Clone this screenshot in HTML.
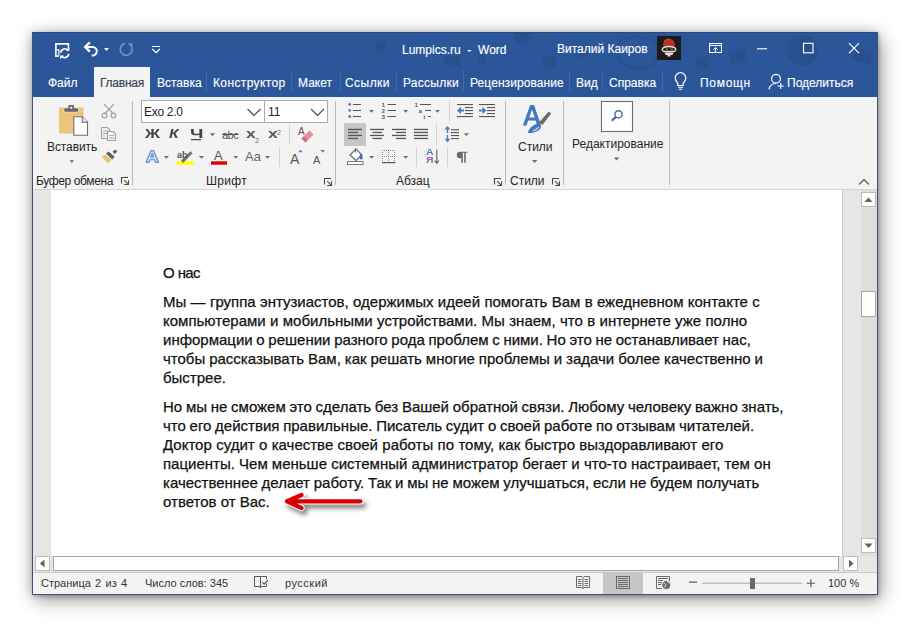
<!DOCTYPE html>
<html><head><meta charset="utf-8">
<style>
*{margin:0;padding:0;box-sizing:border-box}
html,body{width:910px;height:627px;overflow:hidden;background:#fff;font-family:"Liberation Sans",sans-serif}
.a{position:absolute}
#win{position:absolute;left:32px;top:32px;width:846px;height:563px;background:#2b579a;border:1px solid #3d5374;border-top-color:#27497f;box-shadow:1px 2px 4px rgba(0,0,0,.2),3px 5px 18px rgba(0,0,0,.4),-2px -1px 10px rgba(0,0,0,.1)}
.t{position:absolute;white-space:pre;line-height:1}
.tab{position:absolute;z-index:2;top:75.5px;-webkit-text-stroke:.12px #fff;font-size:12px;color:#fff;white-space:pre;line-height:14px}
.sep{position:absolute;width:1px;background:#5d7fb5}
.rl{position:absolute;z-index:2;font-size:12px;color:#262626;white-space:pre;line-height:14px}
.vs{position:absolute;width:1px;background:#d2d2d2}
.doc{position:absolute;z-index:2;left:163px;font-size:15px;color:#111;white-space:pre;line-height:19px;-webkit-text-stroke:.25px #111}
</style></head><body>
<div id="win"></div>

<!-- ribbon bg -->
<div class="a" style="left:33px;top:97px;width:844px;height:92px;background:#f3f3f3"></div>
<div class="a" style="left:33px;top:189px;width:844px;height:1px;background:#d5d5d5"></div>
<!-- active tab -->
<div class="a" style="left:94px;top:67px;width:56px;height:30px;background:#f3f3f3"></div>

<!-- doc area -->
<div class="a" style="left:33px;top:190px;width:844px;height:366px;background:#e6e6e6"></div>
<div class="a" style="left:51px;top:190px;width:791px;height:366px;background:#fff"></div>
<div class="a" style="left:842px;top:190px;width:1px;height:366px;background:#c8c8c8"></div>

<!-- status bar -->
<div class="a" style="left:33px;top:572px;width:844px;height:22px;background:#f3f3f3"></div>


<!-- ribbon labels -->
<div class="rl" style="left:47px;top:140px;letter-spacing:-.1px">Вставить</div>
<div class="rl" style="left:36px;top:174px;letter-spacing:-.38px">Буфер обмена</div>
<div class="rl" style="left:206px;top:174px;letter-spacing:.3px">Шрифт</div>
<div class="rl" style="left:396px;top:174px">Абзац</div>
<div class="rl" style="left:510px;top:174px">Стили</div>
<div class="rl" style="left:518px;top:140px">Стили</div>
<div class="rl" style="left:572px;top:137px">Редактирование</div>
<div class="rl" style="left:144px;top:105px;font-size:12px;letter-spacing:-.3px">Exo 2.0</div>
<div class="rl" style="left:268px;top:105px;font-size:12px">11</div>
<div class="rl" style="left:145px;top:127px;font-size:12px;font-weight:bold;color:#444;transform:scaleX(1.38);transform-origin:0 0">Ж</div>
<div class="rl" style="left:169px;top:127px;font-size:12px;font-weight:bold;font-style:italic;color:#444;transform:scaleX(1.3);transform-origin:0 0">К</div>
<div class="rl" style="left:190px;top:127px;font-size:12px;font-weight:bold;color:#444;transform:scaleX(1.6);transform-origin:0 0">Ч</div>
<div class="rl" style="left:222px;top:128px;font-size:11px;color:#555;letter-spacing:-0.5px">abc</div>
<div class="rl" style="left:246px;top:127px;font-size:13px;font-weight:bold;color:#555;transform:scaleX(1.35);transform-origin:0 0">x</div>
<div class="rl" style="left:255px;top:134px;font-size:7px;color:#4a70b0">2</div>
<div class="rl" style="left:268px;top:127px;font-size:13px;font-weight:bold;color:#555;transform:scaleX(1.35);transform-origin:0 0">x</div>
<div class="rl" style="left:277px;top:125.5px;font-size:7px;color:#4a70b0">2</div>
<div class="rl" style="left:298px;top:125px;font-size:10px;color:#555">A</div>
<div class="rl" style="left:177px;top:148px;font-size:9px;font-weight:bold;color:#555">ab</div>
<div class="rl" style="left:214px;top:149px;font-size:13px;color:#555">A</div>
<div class="rl" style="left:245px;top:150px;font-size:13px;color:#666">Aa</div>
<div class="rl" style="left:290px;top:152px;font-size:14px;color:#555">A</div>
<div class="rl" style="left:313px;top:152.5px;font-size:11px;color:#555">A</div>


<div class="rl" style="left:425.5px;top:147.5px;font-size:9.5px;font-weight:bold;color:#4a7dc0;line-height:8.5px;transform:scaleX(1.1);transform-origin:0 0">А<br><span style="color:#9b5cb8">Я</span></div>


<!-- tabs text -->
<div class="tab" style="left:48px">Файл</div>
<div class="tab" style="left:100px;color:#3c4658;-webkit-text-stroke:.2px #3c4658;letter-spacing:-.25px">Главная</div>
<div class="tab" style="left:157px">Вставка</div>
<div class="tab" style="left:213px;letter-spacing:.38px">Конструктор</div>
<div class="tab" style="left:298px">Макет</div>
<div class="tab" style="left:345px;letter-spacing:.45px">Ссылки</div>
<div class="tab" style="left:403px;letter-spacing:.25px">Рассылки</div>
<div class="tab" style="left:470px;letter-spacing:.08px">Рецензирование</div>
<div class="tab" style="left:576px">Вид</div>
<div class="tab" style="left:609px">Справка</div>
<div class="tab" style="left:700px;letter-spacing:.7px">Помощн</div>
<div class="tab" style="left:787px">Поделиться</div>



<!-- doodles -->
<svg class="a" style="left:0;top:0" width="910" height="627" viewBox="0 0 910 627">
 <g fill="#000" opacity="0.075">
  <circle cx="380.5" cy="46" r="5.5"/>
  <path d="M445 56h14l2 9h-18z"/>
  <circle cx="482" cy="59" r="4.5"/>
  <path d="M514 33h18l-2 10h-14z"/>
  <rect x="543" y="56" width="13" height="12" rx="3"/>
  <circle cx="802.6" cy="50.6" r="15.5"/>
  <path d="M728 52l16-4 4 13-16 4z"/>
  <rect x="696" y="57" width="13" height="11" rx="3"/>
  <path d="M855 47l18 5-3 13-18-5z"/>
  <circle cx="583" cy="52" r="6"/>
 </g>
 <path d="M620 40c10-5 30-5 36 5 4 8 0 20-10 23-12 3-26-2-28-12z" fill="none" stroke="#000" stroke-opacity="0.075" stroke-width="2.5"/>
</svg>

<!-- title bar icons -->
<svg class="a" style="left:0;top:0" width="910" height="627" viewBox="0 0 910 627">
 <g fill="none" stroke="#fff" stroke-width="1.6">
  <!-- save/autosave -->
  <path d="M55.9 57V43.9H68.4V48.6"/>
  <path d="M55.9 56.1H59"/>
 </g>
 <path d="M56.5 49.9H58.9V55.5" fill="none" stroke="#fff" stroke-width="1.2"/>
 <path d="M60.9 52.6a4 4 0 0 1 7.2-2.2M68.7 53.8a4 4 0 0 1-7.2 2.2" fill="none" stroke="#fff" stroke-width="1.7"/>
 <path d="M65.8 50.8h3.6v-3.6z M63.8 55.6h-3.6v3.6z" fill="#fff"/>
 <!-- undo -->
 <path d="M85.5 46.9h7a4.3 4.3 0 0 1 0 8.6h-.8" fill="none" stroke="#fff" stroke-width="2"/>
 <path d="M89 43.2l-3.8 3.7 3.8 3.8" fill="none" stroke="#fff" stroke-width="2.4" stroke-linecap="square"/>
 <path d="M104 48h5l-2.5 3z" fill="#fff"/>
 <!-- redo disabled -->
 <path d="M131.6 47.2a5.9 5.9 0 1 1-6.6-3.6" fill="none" stroke="#6f93cc" stroke-width="1.7"/>
 <path d="M127.6 43.3h4.8v4.8z" fill="#6f93cc"/>
 <!-- customize qat -->
 <path d="M152 46.5h8M152.3 49l3.8 3.6 3.8-3.6" fill="none" stroke="#fff" stroke-width="1.2"/>
 <!-- avatar -->
 <rect x="657" y="36" width="24" height="24" fill="#1e1a1b"/>
 <path d="M663 46c0-4.5 2.6-7.5 6-7.5s6 3 6 7.5z" fill="#b3302d"/>
 <path d="M664 41.5c1.5-1.5 3-2.2 5-2.2" fill="none" stroke="#d4574f" stroke-width="1"/>
 <path d="M662.5 48.5c1.5-1.8 3.5-2 6.5-2s5 .2 6.5 2c.5 1.2-.3 2.5-1.2 3H663.7c-.9-.5-1.7-1.8-1.2-3z" fill="none" stroke="#ecdccc" stroke-width="1.3"/>
 <path d="M665.5 49.2h2.5M670.5 49.2h2.5" stroke="#8c7a70" stroke-width="1.2"/>
 <path d="M664.5 52.5h9l-1 2.5h-2v1.5h-3V55h-2z" fill="#e8dccf"/>
 <!-- ribbon display options -->
 <rect x="709.5" y="43.5" width="12" height="9" fill="none" stroke="#fff" stroke-width="1"/>
 <path d="M710 45.5h11M715.5 52v-4.5M713.3 49.7l2.2-2.2 2.2 2.2" fill="none" stroke="#fff" stroke-width="1"/>
 <!-- window controls -->
 <path d="M757 48.8h10" stroke="#fff" stroke-width="1.1"/>
 <rect x="803.5" y="43.3" width="9.5" height="9.5" fill="none" stroke="#fff" stroke-width="1.1"/>
 <path d="M849 43.2l10 10M859 43.2l-10 10" stroke="#fff" stroke-width="1.2"/>
 <!-- tab separators -->
 <g fill="#4069ab">
  <rect x="206" y="70" width="1" height="21"/>
  <rect x="291" y="70" width="1" height="21"/>
  <rect x="340" y="70" width="1" height="21"/>
  <rect x="396" y="70" width="1" height="21"/>
  <rect x="463" y="70" width="1" height="21"/>
  <rect x="569" y="70" width="1" height="21"/>
  <rect x="602" y="70" width="1" height="21"/>
  <rect x="662" y="70" width="1" height="21"/>
 </g>
 <!-- bulb -->
 <path d="M677.8 83.2c-1.6-1.5-2.6-3.2-2.6-5.2a5.3 5.3 0 0 1 10.6 0c0 2-1 3.7-2.6 5.2v2.3h-5.4z" fill="none" stroke="#fff" stroke-width="1.2"/>
 <path d="M678 87.3h5M678.8 89.2h3.4" stroke="#fff" stroke-width="1.1"/>
 <!-- share -->
 <circle cx="776" cy="78.8" r="4.4" fill="none" stroke="#fff" stroke-width="1.2"/>
 <path d="M769 89.5c.6-3.6 3.2-6 7-6" fill="none" stroke="#fff" stroke-width="1.2"/>
 <path d="M777.6 86h6.2M780.7 83v6" stroke="#fff" stroke-width="1.2"/>
</svg>


<!-- ribbon -->
<svg class="a" style="left:0;top:0" width="910" height="627" viewBox="0 0 910 627">
 <!-- group separators -->
 <g fill="#b8b8b8">
  <rect x="132" y="101" width="1" height="84"/>
  <rect x="335" y="101" width="1" height="84"/>
  <rect x="505" y="101" width="1" height="84"/>
  <rect x="563" y="101" width="1" height="84"/>
  <rect x="669" y="101" width="1" height="84"/>
 </g>
 <g fill="#d2d2d2">
  <rect x="289" y="124" width="1" height="20"/>
  <rect x="279" y="147" width="1" height="20"/>
  <rect x="449" y="100" width="1" height="21"/>
  <rect x="436" y="124" width="1" height="22"/>
  <rect x="416" y="147" width="1" height="20"/>
  <rect x="447" y="147" width="1" height="20"/>
 </g>
 <!-- clipboard paste -->
 <rect x="59" y="107.5" width="24.5" height="26" fill="#eec47c"/>
 <rect x="63.6" y="107.6" width="15.2" height="4.6" rx="1" fill="#f6e3c0"/>
 <rect x="64.3" y="108.2" width="13.8" height="3.6" rx="0.8" fill="#666"/>
 <rect x="68.4" y="105" width="5.6" height="4" rx="1" fill="#666"/>
 <rect x="70.1" y="106.8" width="2.2" height="2" fill="#f3f3f3"/>
 <path d="M73.8 116.8h8.4l5.3 5.3v13.2h-13.7z" fill="#fff" stroke="#6e6e6e" stroke-width="1.1"/>
 <path d="M82.2 116.8v5.3h5.3" fill="#f3f3f3" stroke="#6e6e6e" stroke-width="1.1"/>
 <path d="M69.5 160.2h4.6l-2.3 2.7z" fill="#6d6d6d"/>
 <!-- scissors -->
 <g fill="none" stroke="#a6a6a6" stroke-width="1.3">
  <path d="M104 104l9.5 10M114 104l-9.5 10"/>
  <circle cx="104.5" cy="115.5" r="2.4"/><circle cx="113.5" cy="115.5" r="2.4"/>
 </g>
 <!-- copy -->
 <g fill="#f3f3f3" stroke="#a0a0a0" stroke-width="1.1">
  <path d="M101.5 127.5h6l2 2v9h-8z"/>
  <path d="M107.5 131.5h5.5l2.5 2.5v6.5h-8z"/>
 </g>
 <path d="M103 131h4M103 133.5h4M103 136h2M109.5 135.5h4.5M109.5 138h4.5" stroke="#a0a0a0" stroke-width="0.9"/>
 <!-- format painter -->
 <path d="M101.5 156.4l4-2 5.9 5.4-3.6 3.6z" fill="#ebc078"/>
 <path d="M106 153.6l2.6-2.2 6 5.4-2.4 2.6z" fill="#5e5e5e"/>
 <path d="M112.6 151.6l2.8-2.2 1.8 2-2.6 2.8z" fill="#5e5e5e"/>

 <!-- font boxes -->
 <rect x="141.5" y="100.5" width="123" height="22" fill="#fff" stroke="#ababab"/>
 <rect x="264.5" y="100.5" width="63" height="22" fill="#fff" stroke="#ababab"/>
 <path d="M247.5 109l6.5 6.5 6.5-6.5M311 109l6.5 6.5 6.5-6.5" fill="none" stroke="#444" stroke-width="1.1"/>

 <!-- font row 2 dropdowns -->
 <g fill="#6d6d6d">
  <path d="M210 133.2h5l-2.5 3z"/>
  <path d="M163.8 156h5.2l-2.6 2.8z"/>
  <path d="M198.9 156h5.2l-2.6 2.8z"/>
  <path d="M233.5 156h4.6l-2.3 2.8z"/>
  <path d="M265.2 156h4.8l-2.4 2.8z"/>
  <path d="M369 155.9h5.3l-2.65 2.7z"/>
  <path d="M403 155.9h5.3l-2.65 2.7z"/>
  <path d="M369 110.1h5l-2.5 2.7z"/>
  <path d="M403.2 110.1h4.8l-2.4 2.7z"/>
  <path d="M435 110.1h5l-2.5 2.7z"/>
  <path d="M463.9 133.2h5l-2.5 2.8z"/>
  <path d="M531.8 160.1h5.6l-2.8 2.9z"/>
  <path d="M613.8 157.6h5.6l-2.8 2.9z"/>
 </g>
 <!-- underline of Ч -->
 <rect x="191" y="139" width="10" height="1.2" fill="#444"/>
 <!-- strikethrough -->
 <rect x="222" y="134" width="16.5" height="1" fill="#555"/>
 <!-- eraser -->
 <path d="M301.5 138.5l8-8 4 4-8 8z" fill="#e88a9b"/>
 <path d="M301.5 138.5l2.2-2.2 4 4-2.2 2.2z" fill="#d86b80"/>
 <!-- text effect A -->
 <path d="M146.2 162.2l4.8-11.4h2.6l4.8 11.4h-2.9l-1-2.7h-4.4l-1 2.7zm4.8-5.3h2.6l-1.3-3.6z" fill="#f4f7fc" stroke="#6f9bd3" stroke-width="1.6" stroke-linejoin="round"/>
 <!-- highlight -->
 <rect x="177" y="161.3" width="17" height="3.5" fill="#ffff00"/>
 <path d="M181 160.5l9.5-9.2 2 2-9.2 9.5z" fill="#6e6e6e"/>
 <!-- font color -->
 <rect x="211" y="161.3" width="16" height="3.4" fill="#e00000"/>
 <!-- grow/shrink triangles -->
 <path d="M298 152.3l2.5-2.5 2.5 2.5z" fill="#5b86bd"/>
 <path d="M320.2 150h4.9l-2.45 2.7z" fill="#5b86bd"/>

 <!-- bullets -->
 <g fill="#5b7fae">
  <circle cx="349.7" cy="104.4" r="1.4"/><circle cx="349.7" cy="110.4" r="1.4"/><circle cx="349.7" cy="116.5" r="1.4"/>
 </g>
 <g fill="#555">
  <rect x="353" y="104" width="8" height="1"/><rect x="353" y="110" width="8" height="1"/><rect x="353" y="116" width="8" height="1"/>
  <rect x="387.5" y="104" width="8.5" height="1"/><rect x="387.5" y="110" width="8.5" height="1"/><rect x="387.5" y="116" width="8.5" height="1"/>
  <rect x="420" y="104" width="11" height="1"/><rect x="425" y="110" width="6" height="1"/><rect x="428" y="116" width="3" height="1"/>
 </g>
 <!-- numbering digits -->
 <g font-family="Liberation Sans" font-weight="bold" font-size="6.2" fill="#3f5f92">
  <text x="381.6" y="107">1</text><text x="381.6" y="113">2</text><text x="381.6" y="119">3</text>
  <text x="414.6" y="107">1</text><text x="418.6" y="113">a</text><text x="423.4" y="119">i</text>
 </g>
 <!-- alignment -->
 <rect x="344" y="123" width="22" height="23" fill="#c6c6c6"/>
 <g fill="#555">
  <rect x="348" y="128.8" width="14" height="1.3"/><rect x="348" y="131.8" width="10" height="1.3"/><rect x="348" y="134.8" width="14" height="1.3"/><rect x="348" y="137.8" width="10" height="1.3"/>
  <rect x="370" y="128.8" width="14" height="1.3"/><rect x="372.5" y="131.8" width="9.5" height="1.3"/><rect x="370" y="134.8" width="14" height="1.3"/><rect x="372.5" y="137.8" width="9.5" height="1.3"/>
  <rect x="392" y="128.8" width="14" height="1.3"/><rect x="396" y="131.8" width="10" height="1.3"/><rect x="392" y="134.8" width="14" height="1.3"/><rect x="396" y="137.8" width="10" height="1.3"/>
  <rect x="414" y="128.8" width="14" height="1.3"/><rect x="414" y="131.8" width="14" height="1.3"/><rect x="414" y="134.8" width="14" height="1.3"/><rect x="414" y="137.8" width="14" height="1.3"/>
 </g>
 <!-- indent -->
 <g fill="#555">
  <rect x="457" y="104" width="16" height="1.1"/><rect x="465" y="107" width="8" height="1.1"/><rect x="465" y="110" width="8" height="1.1"/><rect x="465" y="113" width="8" height="1.1"/><rect x="457" y="116" width="16" height="1.1"/>
  <rect x="479" y="104" width="16" height="1.1"/><rect x="487" y="107" width="8" height="1.1"/><rect x="487" y="110" width="8" height="1.1"/><rect x="487" y="113" width="8" height="1.1"/><rect x="479" y="116" width="16" height="1.1"/>
 </g>
 <path d="M464 110.5h-4" fill="none" stroke="#4a7dc0" stroke-width="2"/><path d="M457 110.5l4-3.8v7.6z" fill="#4a7dc0"/>
 <path d="M479 110.5h4" fill="none" stroke="#4a7dc0" stroke-width="2"/><path d="M486.5 110.5l-4-3.8v7.6z" fill="#4a7dc0"/>
 <!-- line spacing -->
 <path d="M447.5 127v6M447.5 135v6.5" fill="none" stroke="#4a7dc0" stroke-width="1.4"/><path d="M444.6 129.6l2.9-3.6 2.9 3.6zM444.6 138.8l2.9 3.6 2.9-3.6z" fill="#4a7dc0"/>
 <g fill="#555"><rect x="451" y="129.2" width="8" height="1.1"/><rect x="451" y="132" width="8" height="1.1"/><rect x="451" y="135" width="8" height="1.1"/><rect x="451" y="138" width="8" height="1.1"/></g>
 <!-- shading -->
 <path d="M350 155l6-6 6 6-6 5.5z" fill="#fff" stroke="#666" stroke-width="1.1"/>
 <path d="M355.5 148.5v4" stroke="#666" stroke-width="1"/>
 <path d="M360 153.5c1.5 1.5 2.8 3 2.8 4.3a1.6 1.6 0 0 1-3.2 0c0-.8.2-2 .4-4.3z" fill="#3e6fb0"/>
 <rect x="347.5" y="161.5" width="15.5" height="3" fill="#fff" stroke="#777" stroke-width="1"/>
 <!-- borders -->
 <g fill="#888">
  <path d="M382 150h1v1h-1zM384 150h1v1h-1zM386 150h1v1h-1zM388 150h1v1h-1zM390 150h1v1h-1zM392 150h1v1h-1zM394 150h1v1h-1z"/>
  <path d="M382 156h1v1h-1zM384 156h1v1h-1zM386 156h1v1h-1zM388 156h1v1h-1zM390 156h1v1h-1zM392 156h1v1h-1zM394 156h1v1h-1z"/>
  <path d="M382 152h1v1h-1zM382 154h1v1h-1zM382 158h1v1h-1zM382 160h1v1h-1zM388 152h1v1h-1zM388 154h1v1h-1zM388 158h1v1h-1zM388 160h1v1h-1zM394 152h1v1h-1zM394 154h1v1h-1zM394 158h1v1h-1zM394 160h1v1h-1z"/>
 </g>
 <rect x="382" y="162" width="13.5" height="1.2" fill="#555"/>
 <!-- pilcrow -->
 <path d="M463.2 151.8h-3.2a3.2 3.2 0 0 0 0 6.4h1.2v4.6h1.6v-10h1.4v10h1.6v-10h1.6v-1z" fill="#6a6a6a"/>
 <!-- sort -->
 <path d="M436.8 149.5v13.5M434.6 160.5l2.2 2.8 2.2-2.8" fill="none" stroke="#666" stroke-width="1.2"/>

 <!-- styles icon -->
 <path d="M522.8 125.6L530.2 105h3.8l7.2 20.6h-3.9l-1.7-5h-7.4l-1.7 5zm6.5-8.2h5.4l-2.7-8z" fill="#4378c0"/>
 <path d="M539.2 122.2l9.6-10.8 2.4 2.2-8.8 11.4z" fill="#6b6b6b"/>
 <path d="M527.8 133c1.2-4 4.2-7.6 8.6-9 3-.9 5 .9 4.4 3.4-.9 3.5-6.5 5.6-13 5.6z" fill="#4378c0"/>
 <path d="M533 131c2-.6 4.5-2 5.8-3.8" fill="none" stroke="#d8e6f6" stroke-width="1.2"/>
 <!-- editing box -->
 <rect x="601.5" y="101.5" width="31" height="30" fill="#fff" stroke="#6e6e6e" stroke-width="1.1"/>
 <circle cx="618.5" cy="114.3" r="3.6" fill="none" stroke="#3e6ba8" stroke-width="1.4"/>
 <path d="M615.8 117l-4 3.8" stroke="#3e6ba8" stroke-width="2.2"/>

 <!-- dialog launchers -->
 <g fill="none" stroke="#4a4a4a" stroke-width="1.1">
  <path d="M121.5 183.5V177.5H128M124.2 180.2l3.6 3.6M124.2 184.5H128.5V180.2"/>
  <path d="M324.5 184.5V178.5H331M327.2 181.2l3.6 3.6M327.2 185.5H331.5V181.2"/>
  <path d="M494.5 184.5V178.5H501M497.2 181.2l3.6 3.6M497.2 185.5H501.5V181.2"/>
  <path d="M552.5 184.5V178.5H559M555.2 181.2l3.6 3.6M555.2 185.5H559.5V181.2"/>
 </g>
 <!-- collapse ribbon -->
 <path d="M859 184.5l5-5 5 5" fill="none" stroke="#555" stroke-width="1.1"/>
</svg>


<!-- scrollbars & status -->
<svg class="a" style="left:0;top:0" width="910" height="627" viewBox="0 0 910 627">
 <!-- vertical scrollbar track -->
 <rect x="861" y="190" width="16" height="366" fill="#dedede"/>
 <rect x="861.5" y="192.5" width="14" height="14" fill="#fff" stroke="#bcbcbc"/>
 <path d="M864.5 202h8l-4-4.5z" fill="#606060"/>
 <rect x="861.5" y="291.5" width="14" height="25" fill="#fff" stroke="#a6a6a6"/>
 <rect x="861.5" y="538.5" width="14" height="14" fill="#fff" stroke="#bcbcbc"/>
 <path d="M864.5 543.5h8l-4 4.5z" fill="#606060"/>
 <!-- horizontal scrollbar -->
 <rect x="33" y="556" width="844" height="16" fill="#e6e6e6"/>
 <rect x="35.5" y="556.5" width="14" height="14" fill="#fff" stroke="#bcbcbc"/>
 <path d="M44.5 559.5v8l-4.5-4z" fill="#606060"/>
 <rect x="53.5" y="556.5" width="785" height="14" fill="#fff" stroke="#a6a6a6"/>
 <rect x="843.5" y="556.5" width="14" height="14" fill="#fff" stroke="#bcbcbc"/>
 <path d="M849 559.5v8l4.5-4z" fill="#606060"/>
 <rect x="33" y="572" width="844" height="1" fill="#c8c8c8"/>
 <!-- proofing book -->
 <g fill="none" stroke="#555" stroke-width="1">
  <path d="M260.5 576.5H254.5V586.5H259.5L260.5 588L261.5 586.5H266.5V583.5"/>
  <path d="M260.5 576.5H266.5V579"/>
  <path d="M260.5 577V587.5"/>
  <path d="M262.3 582.2l1.9 1.9 3.6-3.9" stroke-width="1.2"/>
 </g>
 <!-- view buttons -->
 <rect x="603" y="572" width="40" height="22" fill="#c6c6c6"/>
 <g fill="none" stroke="#6a6a6a" stroke-width="1">
  <path d="M576.5 576.5h5.5l1 1 1-1h5.5v11h-5.5l-1 1.2-1-1.2h-5.5z"/>
  <path d="M583 577.5v11"/>
  <path d="M578 579.5h3.5M578 581.5h3.5M578 583.5h3.5M578 585.5h3.5M584.5 579.5h3.5M584.5 581.5h3.5M584.5 583.5h3.5M584.5 585.5h3.5"/>
  <rect x="616.5" y="576.5" width="13" height="12"/>
  <path d="M618 578.5h10M618 580.5h10M618 582.5h10M618 584.5h10M618 586.5h10"/>
  <path d="M662 588.5h-5.5v-12h13v4.5"/>
  <path d="M658 578.5h10M658 580.5h5M658 582.5h4M658 584.5h3"/>
 </g>
 <circle cx="666.3" cy="585" r="4.6" fill="#6a6a6a" stroke="#f3f3f3" stroke-width="1"/>
 <path d="M663.5 583.2c1.2 0 2 .8 2.2 2.2l-1.2 2M667.5 581.2c0 1.2 1 2 2.4 1.6" stroke="#f3f3f3" stroke-width="1" fill="none"/>
 <!-- zoom -->
 <rect x="689" y="581.5" width="8" height="1.2" fill="#555"/>
 <rect x="702" y="582.7" width="100" height="1" fill="#a8a8a8"/>
 <rect x="750" y="578" width="5" height="11" fill="#6a6a6a"/>
 <path d="M806.8 583.2h8.2M810.9 579.2v8" stroke="#555" stroke-width="1.1"/>
 <!-- arrow -->
 <defs><filter id="sh" x="-20%" y="-80%" width="150%" height="300%"><feGaussianBlur stdDeviation="2.4"/></filter></defs>
 <g transform="translate(3,4)" opacity="0.5" filter="url(#sh)">
  <path d="M360.5 501.3H287M301.5 495l-14.5 6.3 14.5 6.7" fill="none" stroke="#000" stroke-width="6" stroke-linecap="round" stroke-linejoin="round"/>
 </g>
 <path d="M360.5 501.3H287M301.5 495l-14.5 6.3 14.5 6.7" fill="none" stroke="#fff" stroke-width="6.4" stroke-linecap="round" stroke-linejoin="round"/>
 <path d="M360.5 501.3H287M301.5 495l-14.5 6.3 14.5 6.7" fill="none" stroke="#d60000" stroke-width="4.2" stroke-linecap="round" stroke-linejoin="round"/>
</svg>
<div class="rl" style="left:41px;top:576px;font-size:11px;color:#333;word-spacing:1.2px">Страница 2 из 4</div>
<div class="rl" style="left:145px;top:576px;font-size:11px;color:#333">Число слов: 345</div>
<div class="rl" style="left:285px;top:576px;font-size:11px;color:#333;letter-spacing:.5px">русский</div>
<div class="rl" style="left:828px;top:576px;font-size:11px;color:#333">100 %</div>

<!-- title -->
<div class="t" style="left:402px;top:44px;font-size:12px;color:#fff;-webkit-text-stroke:.12px #fff">Lumpics.ru  -  Word</div>
<div class="t" style="left:557px;top:43px;font-size:12px;color:#fff;-webkit-text-stroke:.12px #fff">Виталий Каиров</div>

<!-- document text -->
<div class="doc" style="top:263px;letter-spacing:-.6px">О нас</div>
<div class="doc" style="top:292px"><span style="word-spacing:.16px">Мы — группа энтузиастов, одержимых идеей помогать Вам в ежедневном контакте с</span>
<span style="word-spacing:.2px">компьютерами и мобильными устройствами. Мы знаем, что в интернете уже полно</span>
<span style="word-spacing:-.5px">информации о решении разного рода проблем с ними. Но это не останавливает нас,</span>
<span style="word-spacing:-.24px">чтобы рассказывать Вам, как решать многие проблемы и задачи более качественно и</span>
быстрее.</div>
<div class="doc" style="top:397px"><span style="word-spacing:-.44px">Но мы не сможем это сделать без Вашей обратной связи. Любому человеку важно знать,</span>
<span style="word-spacing:-.45px">что его действия правильные. Писатель судит о своей работе по отзывам читателей.</span>
<span style="word-spacing:.18px">Доктор судит о качестве своей работы по тому, как быстро выздоравливают его</span>
пациенты. Чем меньше системный администратор бегает и что-то настраивает, тем он
<span style="word-spacing:-.42px">качественнее делает работу. Так и мы не можем улучшаться, если не будем получать</span>
ответов от Вас.</div>

</body></html>
